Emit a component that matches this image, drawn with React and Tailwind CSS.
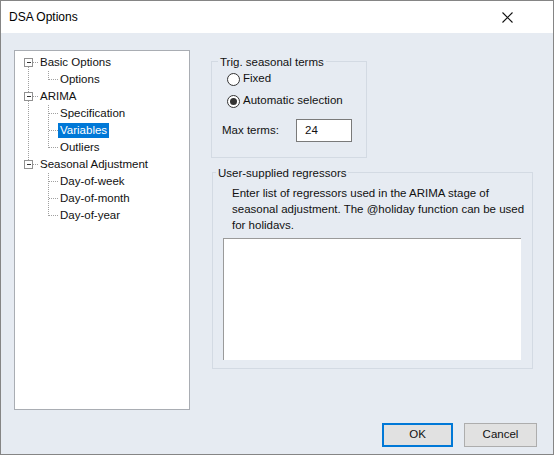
import React from "react";

const rows = [
  { label: "Basic Options", level: 0 },
  { label: "Options", level: 1 },
  { label: "ARIMA", level: 0 },
  { label: "Specification", level: 1 },
  { label: "Variables", level: 1, selected: true },
  { label: "Outliers", level: 1 },
  { label: "Seasonal Adjustment", level: 0 },
  { label: "Day-of-week", level: 1 },
  { label: "Day-of-month", level: 1 },
  { label: "Day-of-year", level: 1 },
];

const cy = (i) => 11.5 + 17 * i;

function TreeLines() {
  const roots = [0, 2, 6];
  const groups = [
    [0, [1]],
    [2, [3, 4, 5]],
    [6, [7, 8, 9]],
  ];
  const dot = { stroke: "#a0a0a0", strokeWidth: 1, strokeDasharray: "1 1", shapeRendering: "crispEdges" };
  return (
    <svg className="absolute left-0 top-0" width="174" height="358">
      <line x1="13.5" y1={cy(0)} x2="13.5" y2={cy(6)} style={dot} />
      {groups.map(([p, kids]) => (
        <g key={p}>
          <line x1="33.5" y1={cy(p) + 8} x2="33.5" y2={cy(kids[kids.length - 1])} style={dot} />
          {kids.map((k) => (
            <line key={k} x1="34" y1={cy(k)} x2="43" y2={cy(k)} style={dot} />
          ))}
        </g>
      ))}
      {roots.map((r) => (
        <g key={r}>
          <line x1="18" y1={cy(r)} x2="23" y2={cy(r)} style={dot} />
          <rect x="9.5" y={cy(r) - 4} width="8" height="8" fill="#ffffff" stroke="#919191" shapeRendering="crispEdges" />
          <line x1="11.5" y1={cy(r)} x2="15.5" y2={cy(r)} stroke="#333" shapeRendering="crispEdges" />
        </g>
      ))}
    </svg>
  );
}

function Radio({ checked, label }) {
  return (
    <div className="flex h-[16px] items-center">
      <div className="flex h-[13px] w-[13px] items-center justify-center rounded-full border border-[#333333] bg-white">
        {checked && <div className="h-[7px] w-[7px] rounded-full bg-[#333333]" />}
      </div>
      <span className="ml-[3px]">{label}</span>
    </div>
  );
}

export default function App() {
  return (
    <div
      className="flex h-[455px] w-[554px] flex-col border border-[#858585] bg-[#e6ebf2] text-[11.5px] text-[#111]"
      style={{ fontFamily: '"Liberation Sans", Arial, sans-serif' }}
    >
      <div className="flex h-[32px] shrink-0 items-center justify-between bg-white pl-[8px] pr-[40px] text-[12px] text-black">
        <span>DSA Options</span>
        <svg width="11" height="11" viewBox="0 0 11 11">
          <path d="M0.5 0.5 L10.5 10.5 M10.5 0.5 L0.5 10.5" stroke="#111" strokeWidth="1.1" />
        </svg>
      </div>

      <div className="flex flex-1 flex-col pl-[13px] pt-[17px]">
        <div className="flex">
          <div className="relative h-[360px] w-[176px] border border-[#a9adb3] bg-white pt-[3px]">
            <TreeLines />
            {rows.map((r) => (
              <div
                key={r.label}
                className={`relative flex h-[17px] items-center ${r.level === 0 ? "pl-[25px]" : "pl-[43px]"}`}
              >
                <span
                  className={`flex h-[15px] items-center px-[2px] leading-none ${
                    r.selected ? "bg-[#0078d7] text-white" : ""
                  } ${r.level === 0 ? "-ml-[2px]" : ""}`}
                >
                  {r.label}
                </span>
              </div>
            ))}
          </div>

          <div className="ml-[21px] flex flex-col pt-[11px]">
            <div className="relative h-[97px] w-[156px] border border-[#d3dae3] pl-[15px] pt-[9px]">
              <span className="absolute -top-[8px] left-[6px] bg-[#e6ebf2] px-[2px] leading-[16px]">
                Trig. seasonal terms
              </span>
              <div className="flex flex-col gap-[6px]">
                <Radio label="Fixed" />
                <Radio checked label="Automatic selection" />
              </div>
              <div className="-ml-[5px] mt-[10px] flex items-center">
                <span className="w-[74px]">Max terms:</span>
                <div className="flex h-[23px] w-[56px] items-center border border-[#7a7a7a] bg-white pl-[8px]">
                  24
                </div>
              </div>
            </div>

            <div className="relative ml-[1px] mt-[14px] h-[197px] w-[321px] border border-[#d3dae3] pl-[10px] pt-[12px]">
              <span className="absolute -top-[8px] left-[3px] bg-[#e6ebf2] px-[2px] leading-[16px]">
                User-supplied regressors
              </span>
              <div className="h-[44px] overflow-hidden whitespace-nowrap pl-[9px] leading-[16px]">
                Enter list of regressors used in the ARIMA stage of
                <br />
                seasonal adjustment. The @holiday function can be used
                <br />
                for holidays.
              </div>
              <div className="mt-[9px] h-[122px] w-[298px] border-l border-t border-[#9a9a9a] bg-white" />
            </div>
          </div>
        </div>

        <div className="mt-[13px] flex justify-end gap-[11px] pr-[16px]">
          <button className="flex h-[24px] w-[71px] items-center justify-center border-2 border-[#0078d7] bg-[#e1e1e1] text-[#111]">
            OK
          </button>
          <button className="flex h-[24px] w-[73px] items-center justify-center border border-[#adadad] bg-[#e1e1e1] text-[#111]">
            Cancel
          </button>
        </div>
      </div>
    </div>
  );
}
